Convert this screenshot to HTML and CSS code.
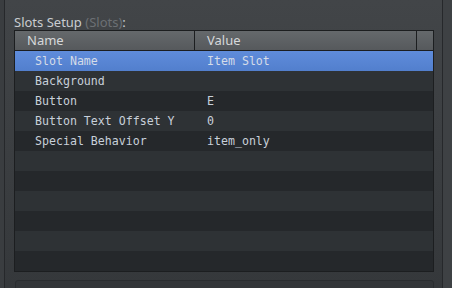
FILE: index.html
```html
<!DOCTYPE html>
<html lang="en">
  <head>
    <meta charset="UTF-8" />
    <title>Slots Setup</title>
    <link rel="stylesheet" href="styles.css">
  </head>
  <body>
    <div class="dock">
      <div class="tab-line"></div>
      <div class="dock-body">
        <div class="field-label">Slots Setup <span class="hint">(Slots)</span>:</div>

        <div class="tree">
          <div class="tree-head">
            <div class="col-name">Name</div>
            <div class="col-value">Value</div>
            <div class="col-pad"></div>
          </div>
          <div class="tree-rows">
            <div class="row selected"><span class="cell-name">Slot Name</span><span class="cell-value">Item Slot</span></div>
            <div class="row"><span class="cell-name">Background</span><span class="cell-value"></span></div>
            <div class="row"><span class="cell-name">Button</span><span class="cell-value">E</span></div>
            <div class="row"><span class="cell-name">Button Text Offset Y</span><span class="cell-value">0</span></div>
            <div class="row"><span class="cell-name">Special Behavior</span><span class="cell-value">item_only</span></div>
            <div class="row"></div>
            <div class="row"></div>
            <div class="row"></div>
            <div class="row"></div>
            <div class="row"></div>
            <div class="row"></div>
          </div>
        </div>

        <div class="next-panel"></div>
      </div>
    </div>
    <div class="side-strip"></div>
  </body>
</html>
```

FILE: styles.css
```css
body {
  margin: 0;
  height: 288px;
  overflow: hidden;
  background-color: #3a3d40;
  display: flex;
  font-family: "Noto Sans", sans-serif;
}

.dock {
  margin-left: 4px;
  width: 437px;
  border-left: 1px solid #26282b;
  border-right: 1px solid #26282b;
  display: flex;
  flex-direction: column;
  background: linear-gradient(#424548, #35383b);
}

.tab-line {
  height: 1px;
  margin-left: 79px;
  background-color: #26282b;
}

.dock-body {
  padding-left: 9px;
  padding-top: 15px;
}

.field-label {
  font-size: 13px;
  line-height: 15px;
  color: #c9ccd0;
}
.hint {
  color: #6c7074;
}

.tree {
  width: 418px;
  border: 1px solid #1c1e20;
  background-color: #25282b;
}

.tree-head {
  display: flex;
  height: 19px;
  border-bottom: 1px solid #1c1e20;
  background: linear-gradient(#65696c, #56595c);
  font-size: 13px;
  line-height: 19px;
  color: #d6d8da;
}
.col-name {
  width: 167px;
  padding-left: 12px;
  border-right: 1px solid #1c1e20;
}
.col-value {
  width: 209px;
  padding-left: 12px;
  border-right: 1px solid #1c1e20;
}
.col-pad {
  flex: 1;
}

.row {
  display: flex;
  height: 20px;
  line-height: 20px;
  font-family: "DejaVu Sans Mono", monospace;
  font-size: 11.6px;
  color: #c8d0da;
}
.row:nth-child(even) {
  background-color: #2e3235;
}
.row:nth-child(odd) {
  background-color: #25282b;
}
.row.selected {
  background: linear-gradient(#5f8cdb, #527fcd);
  color: #d5dce8;
}
.cell-name {
  width: 160px;
  padding-left: 20px;
}
.cell-value {
  padding-left: 12px;
}

.next-panel {
  margin-top: 8px;
  margin-left: 1px;
  width: 417px;
  height: 20px;
  border: 1px solid #2a2d30;
  border-radius: 3px 3px 0 0;
  background-color: #333639;
}

.side-strip {
  flex: 1;
  background-color: #3e4144;
}
```
